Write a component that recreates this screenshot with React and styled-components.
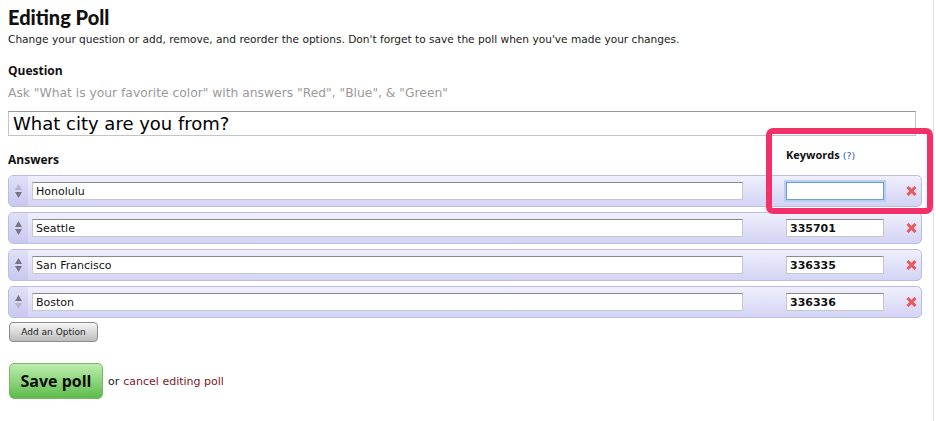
import React from 'react'
import styled, { createGlobalStyle } from 'styled-components'

const GlobalStyle = createGlobalStyle`
    body {
        margin: 0;
        background: #ffffff;
        font-family: "DejaVu Sans", Verdana, sans-serif;
        color: #1a1a1a;
    }
`

const Page = styled.div`
    position: relative;
    box-sizing: border-box;
    width: 934px;
    min-height: 421px;
    padding: 4px 0 0 8px;
    border-right: 1px solid #e2e2e2;
`

const Title = styled.h1`
    margin: 0;
    font-family: Lato, "Open Sans", sans-serif;
    font-weight: 900;
    font-size: 20px;
    line-height: 26px;
    color: #111;
`

const Intro = styled.p`
    margin: 2px 0 0;
    font-size: 10.6px;
    line-height: 14px;
    color: #1a1a1a;
`

const Label = styled.div`
    font-family: "Open Sans", sans-serif;
    font-weight: 700;
    font-size: 12px;
    line-height: 16px;
    color: #111;
`

const QuestionLabel = styled(Label)`
    margin-top: 17px;
`

const Hint = styled.div`
    margin-top: 6px;
    font-size: 12.3px;
    line-height: 16px;
    color: #9a9a9a;
`

const QuestionInput = styled.input`
    display: block;
    box-sizing: border-box;
    width: 908px;
    height: 25px;
    margin-top: 10px;
    padding: 0 4px;
    border: 1px solid #c4c4c4;
    border-top-color: #9a9a9a;
    font-family: "DejaVu Sans", sans-serif;
    font-size: 18px;
    color: #000;
    outline: none;
`

const HeaderRow = styled.div`
    display: flex;
    align-items: flex-end;
    width: 914px;
    margin-top: 8px;
    height: 24px;
`

const AnswersLabel = styled(Label)`
    flex: 1;
`

const KeywordsLabel = styled(Label)`
    width: 136px;
    font-size: 11px;
    margin-bottom: 4px;
`

const Help = styled.a`
    font-family: "DejaVu Sans", sans-serif;
    font-weight: 400;
    font-size: 9.5px;
    color: #2e63a8;
    text-decoration: none;
    margin-left: 3px;
`

const List = styled.div`
    display: flex;
    flex-direction: column;
    gap: 5px;
    margin-top: 7px;
`

const Row = styled.div`
    display: flex;
    align-items: center;
    box-sizing: border-box;
    width: 914px;
    height: 32px;
    border: 1px solid #bcbce4;
    border-radius: 5px;
    background: linear-gradient(#efeffd, #d3d3f5);
    overflow: hidden;
`

const Handle = styled.div`
    display: flex;
    flex-direction: column;
    align-items: center;
    justify-content: center;
    gap: 2px;
    align-self: stretch;
    width: 19px;
    background: linear-gradient(#e0e0f7, #c8c8ef);
`

const TextBox = styled.input`
    box-sizing: border-box;
    height: 18px;
    padding: 0 3px;
    border: 1px solid #c8c8c8;
    border-top-color: #8a8a8a;
    background: #fff;
    font-family: "DejaVu Sans", sans-serif;
    font-size: 11px;
    color: #111;
    outline: none;
`

const AnswerBox = styled(TextBox)`
    width: 711px;
    margin-left: 4px;
`

const KeywordBox = styled(TextBox)`
    width: 98px;
    margin-left: 43px;
    font-weight: 700;
    ${p => p.$focused && `
        border: 1px solid #6f9bd3;
        box-shadow: 0 0 0 2px #b5d0f0;
    `}
`

const Remove = styled.button`
    display: flex;
    align-items: center;
    justify-content: center;
    width: 12px;
    height: 12px;
    margin-left: 21px;
    padding: 0;
    border: 0;
    background: none;
`

const Highlight = styled.div`
    position: absolute;
    left: 766px;
    top: 128px;
    box-sizing: border-box;
    width: 167px;
    height: 86px;
    border: 6px solid #f2316b;
    border-radius: 7px;
    pointer-events: none;
`

const AddButton = styled.button`
    display: block;
    box-sizing: border-box;
    width: 89px;
    height: 20px;
    margin: 4px 0 0 1px;
    padding: 0;
    border: 1px solid #8c8c8c;
    border-radius: 4px;
    background: linear-gradient(#f6f6f6, #bcbcbc);
    font-family: "DejaVu Sans", sans-serif;
    font-size: 9px;
    color: #222;
`

const SaveRow = styled.div`
    display: flex;
    align-items: center;
    margin-top: 21px;
    margin-left: 1px;
    font-size: 11px;
    color: #222;
`

const SaveButton = styled.button`
    box-sizing: border-box;
    width: 94px;
    height: 36px;
    margin-right: 5px;
    border: 1px solid #77b866;
    border-radius: 5px;
    background: linear-gradient(#bdeeae, #5dbb4b);
    font-family: "Open Sans", sans-serif;
    font-weight: 700;
    font-size: 16px;
    color: #0c0c0c;
`

const CancelLink = styled.a`
    margin-left: 4px;
    color: #7e1626;
    text-decoration: none;
`

const Arrow = ({ up, dim }) => (
    <svg width="7" height="6" viewBox="0 0 7 6">
        <path d={up ? 'M3.5 0 L7 6 L0 6 Z' : 'M3.5 6 L7 0 L0 0 Z'} fill={dim ? '#b4b4d2' : '#757588'} />
    </svg>
)

const Cross = () => (
    <svg width="11" height="10" viewBox="0 0 11 10">
        <path d="M1.5 1 L9.5 9 M9.5 1 L1.5 9" stroke="#e9585c" strokeWidth="3" />
    </svg>
)

const answers = [
    { name: 'Honolulu', keyword: '' },
    { name: 'Seattle', keyword: '335701' },
    { name: 'San Francisco', keyword: '336335' },
    { name: 'Boston', keyword: '336336' },
]

const App = () => (
    <Page>
        <GlobalStyle />
        <Title>Editing Poll</Title>
        <Intro>
            Change your question or add, remove, and reorder the options. Don't forget to save the poll when you've made your changes.
        </Intro>
        <QuestionLabel>Question</QuestionLabel>
        <Hint>Ask "What is your favorite color" with answers "Red", "Blue", &amp; "Green"</Hint>
        <QuestionInput defaultValue="What city are you from?" />
        <HeaderRow>
            <AnswersLabel>Answers</AnswersLabel>
            <KeywordsLabel>
                Keywords<Help href="#">(?)</Help>
            </KeywordsLabel>
        </HeaderRow>
        <List>
            {answers.map((a, i) => (
                <Row key={a.name}>
                    <Handle>
                        <Arrow up dim={i === 0} />
                        <Arrow dim={i === answers.length - 1} />
                    </Handle>
                    <AnswerBox defaultValue={a.name} />
                    <KeywordBox defaultValue={a.keyword} $focused={i === 0} />
                    <Remove aria-label="Remove">
                        <Cross />
                    </Remove>
                </Row>
            ))}
        </List>
        <AddButton>Add an Option</AddButton>
        <SaveRow>
            <SaveButton>Save poll</SaveButton>
            or<CancelLink href="#">cancel editing poll</CancelLink>
        </SaveRow>
        <Highlight />
    </Page>
)

export default App
